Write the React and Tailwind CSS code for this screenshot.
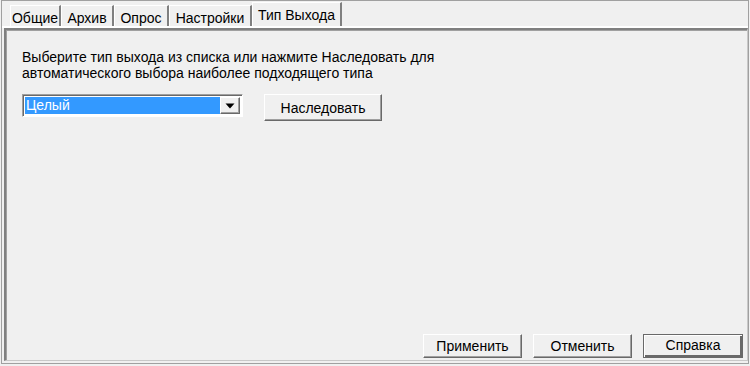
import React from "react";

const font = { fontFamily: '"Liberation Sans", Arial, sans-serif' };

function Tab({ label, w, selected }) {
  return (
    <div
      className={
        "flex items-start justify-center border-l border-t border-white border-r-2 border-r-[#808080] bg-[#f0f0f0] text-[14px] leading-[16px] text-black " +
        (selected ? "h-[24px] pt-[4px]" : "h-[21px] pt-[4px]")
      }
      style={{ width: w }}
    >
      {label}
    </div>
  );
}

function Btn({ children, w, h = "h-[24px]", def }) {
  return (
    <div
      className={
        "flex items-center justify-center bg-[#f0f0f0] text-[14px] leading-[16px] text-black " +
        h +
        (def
          ? " border border-[#696969] shadow-[inset_1px_1px_0_#ffffff,inset_-2px_-2px_0_#696969]"
          : " border border-t-white border-l-white border-r-[#696969] border-b-[#696969] shadow-[inset_-1px_-1px_0_#a0a0a0]")
      }
      style={{ width: w }}
    >
      {children}
    </div>
  );
}

export default function App() {
  return (
    <div className="w-[750px] h-[366px] bg-[#f0f0f0] overflow-hidden" style={font}>
      <div className="ml-[1px] w-[748px] h-[364px] border border-[#a0a0a0] flex flex-col">
        <div className="h-[27px] shrink-0 flex items-end pl-[8px] border-b-2 border-white">
          <Tab label="Общие" w={51} />
          <Tab label="Архив" w={53} />
          <Tab label="Опрос" w={55} />
          <Tab label="Настройки" w={83} />
          <Tab label="Тип Выхода" w={90} selected />
        </div>
        <div className="flex-1 ml-[2px] mb-[2px] border-t-2 border-l-2 border-[#808080] border-r border-b border-r-[#c8c8c8] border-b-[#c8c8c8] shadow-[inset_1px_1px_0_#a0a0a0] flex flex-col">
          <div className="pl-[16px] pt-[19px] text-[14px] leading-[16px] text-black">
            <div>Выберите тип выхода из списка или нажмите Наследовать для</div>
            <div>автоматического выбора наиболее подходящего типа</div>
          </div>
          <div className="pl-[16px] mt-[13px] flex items-start gap-[21px]">
            <div className="w-[221px] h-[23px] bg-white border-t border-l border-[#a0a0a0] border-r border-b border-r-white border-b-white shadow-[inset_1px_1px_0_#696969] flex items-stretch p-[2px]">
              <div className="flex-1 bg-[#3399ff] text-white text-[14px] leading-[17px] pl-[1px]">
                Целый
              </div>
              <div className="w-[20px] bg-[#f0f0f0] border border-t-white border-l-white border-r-[#696969] border-b-[#696969] shadow-[inset_-1px_-1px_0_#a0a0a0] flex items-center justify-center">
                <svg width="10" height="6" viewBox="0 0 10 6">
                  <path d="M0.5 0.5H9.5L5 5.5Z" fill="#000" />
                </svg>
              </div>
            </div>
            <Btn w={118} h="h-[27px]">Наследовать</Btn>
          </div>
          <div className="mt-auto flex justify-end gap-[11px] pr-[4px] pb-[2px]">
            <Btn w={99}>Применить</Btn>
            <Btn w={99}>Отменить</Btn>
            <Btn w={100} def>
              <span className="-mt-[2px]">Справка</span>
            </Btn>
          </div>
        </div>
      </div>
    </div>
  );
}
